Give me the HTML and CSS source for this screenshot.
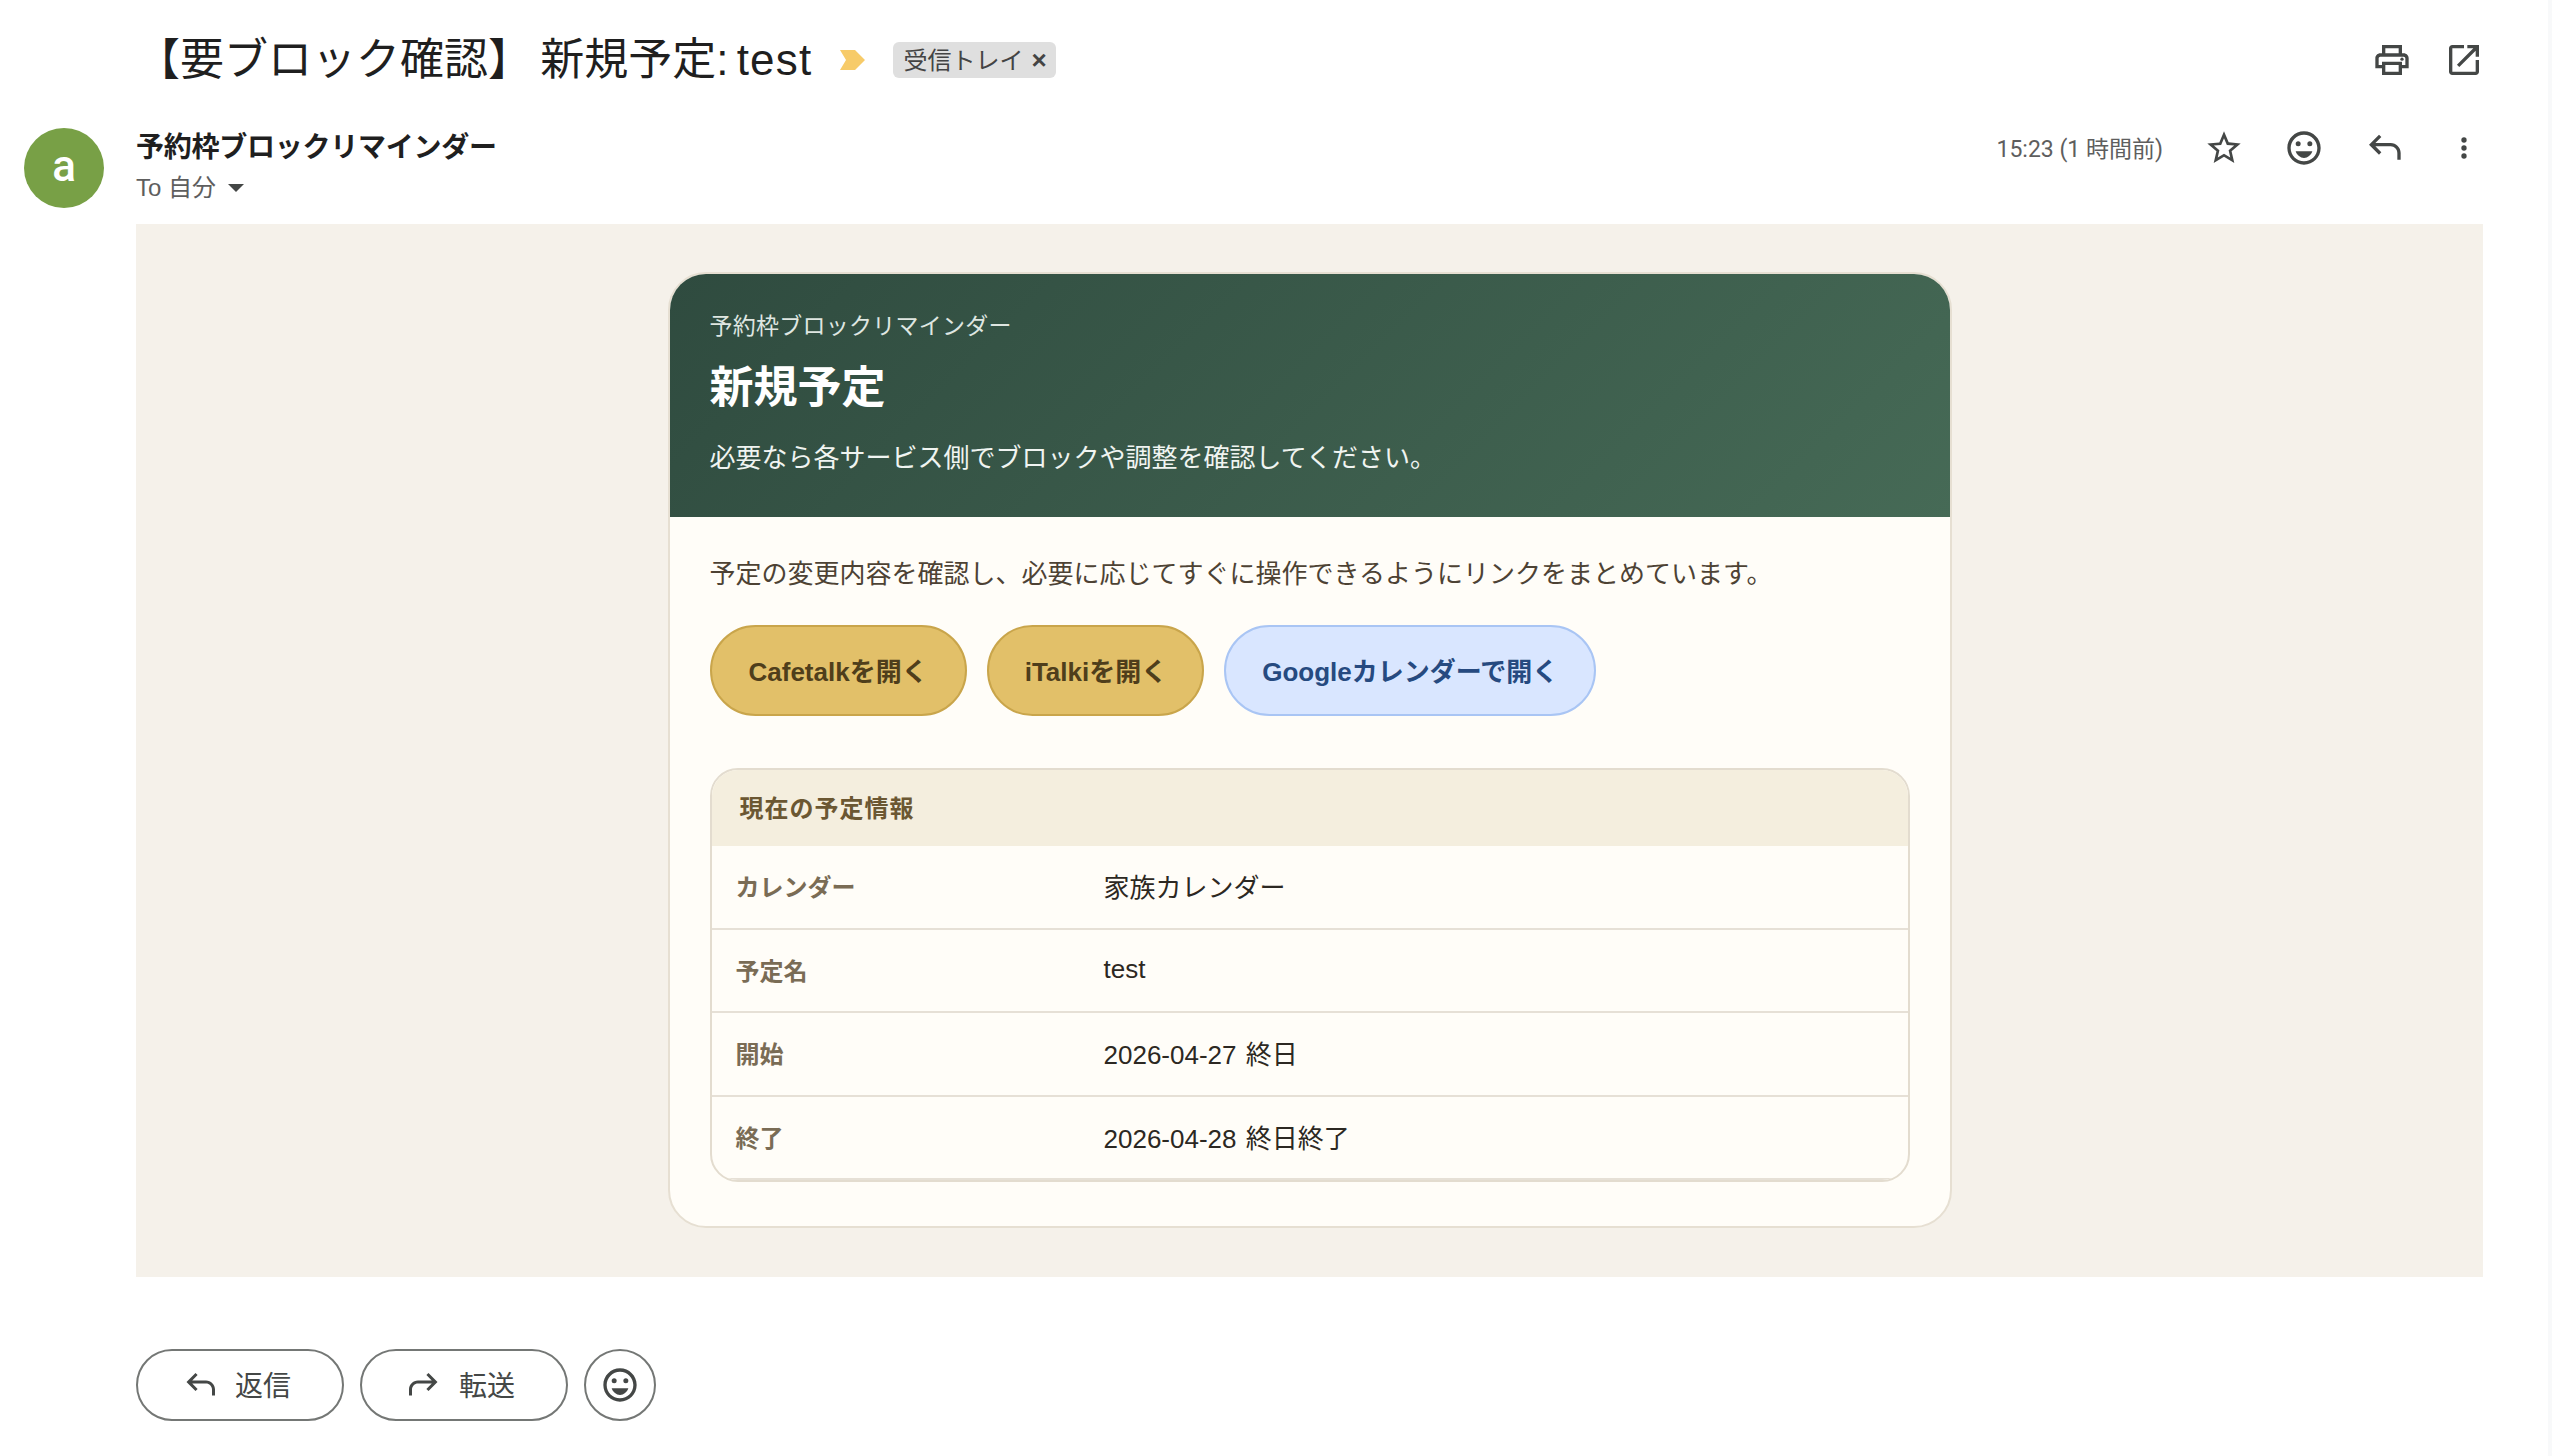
FILE: index.html
```html
<!DOCTYPE html>
<html lang="ja">
<head>
<meta charset="utf-8">
<title>【要ブロック確認】 新規予定: test</title>
<link rel="stylesheet" href="styles.css">
</head>
<body>
<div class="subject-row">
  <h1 class="subject">【要ブロック確認】 新規予定: <span class="subject-latin">test</span></h1>
  <svg class="marker" viewBox="0 0 25 20"><path d="M0 0h15l10 10-10 10H0l6-10z"/></svg>
  <span class="chip"><span class="chip-text">受信トレイ</span><span class="chip-x">×</span></span>
  <div class="top-actions">
    <span class="icon-box"><svg class="icon" viewBox="0 0 24 24"><path d="M19 8h-1V3H6v5H5c-1.66 0-3 1.34-3 3v6h4v4h12v-4h4v-6c0-1.66-1.34-3-3-3zM8 5h8v3H8V5zm8 12v2H8v-4h8v2zm2-2v-2H6v2H4v-4c0-.55.45-1 1-1h14c.55 0 1 .45 1 1v4h-2z"/><circle cx="18" cy="11.5" r="1"/></svg></span>
    <span class="icon-box"><svg class="icon" viewBox="0 0 24 24"><path d="M19 19H5V5h7V3H5c-1.11 0-2 .9-2 2v14c0 1.1.89 2 2 2h14c1.1 0 2-.9 2-2v-7h-2v7zM14 3v2h3.59l-9.83 9.83 1.41 1.41L19 6.41V10h2V3h-7z"/></svg></span>
  </div>
</div>
<div class="msg-head">
  <div class="avatar">a</div>
  <div class="sender">
    <div class="sender-name">予約枠ブロックリマインダー</div>
    <div class="recipient">To 自分<span class="caret"></span></div>
  </div>
  <div class="msg-actions">
    <span class="time">15:23 (1 時間前)</span>
    <span class="action"><svg class="icon" viewBox="0 0 24 24"><path d="M22 9.24l-7.19-.62L12 2 9.19 8.63 2 9.24l5.46 4.73L5.82 21 12 17.27 18.18 21l-1.63-7.03L22 9.24zM12 15.4l-3.76 2.27 1-4.28-3.32-2.88 4.38-.38L12 6.1l1.71 4.04 4.38.38-3.32 2.88 1 4.28L12 15.4z"/></svg></span>
    <span class="action"><svg class="icon" viewBox="0 0 24 24"><path d="M12 2C6.47 2 2 6.47 2 12s4.47 10 10 10 10-4.47 10-10S17.53 2 12 2zm0 18c-4.41 0-8-3.59-8-8s3.59-8 8-8 8 3.59 8 8-3.59 8-8 8z"/><circle cx="8.5" cy="9.5" r="1.5"/><circle cx="15.5" cy="9.5" r="1.5"/><path d="M7 14h10c-.8 2.3-2.8 4-5 4s-4.2-1.7-5-4z"/></svg></span>
    <span class="action"><svg class="icon" viewBox="0 0 24 24"><path d="M20 19v-4c0-2.2-1.8-4-4-4H6.83l3.58 3.59L9 16l-6-6 6-6 1.41 1.41L6.83 9H16c3.31 0 6 2.69 6 6v4h-2z"/></svg></span>
    <span class="action"><svg class="icon-more" viewBox="0 0 24 24"><circle cx="12" cy="6" r="2"/><circle cx="12" cy="12" r="2"/><circle cx="12" cy="18" r="2"/></svg></span>
  </div>
</div>
<main class="msg-body">
  <article class="card">
    <header class="card-head">
      <p class="eyebrow">予約枠ブロックリマインダー</p>
      <h2 class="card-title">新規予定</h2>
      <p class="card-desc">必要なら各サービス側でブロックや調整を確認してください。</p>
    </header>
    <div class="card-main">
      <p class="intro">予定の変更内容を確認し、必要に応じてすぐに操作できるようにリンクをまとめています。</p>
      <div class="links">
        <a class="link link-gold link-cafetalk">Cafetalkを開く</a>
        <a class="link link-gold link-italki">iTalkiを開く</a>
        <a class="link link-blue">Googleカレンダーで開く</a>
      </div>
      <section class="info">
        <h3 class="info-head">現在の予定情報</h3>
        <div class="info-row"><span class="info-label">カレンダー</span><span class="info-value">家族カレンダー</span></div>
        <div class="info-row"><span class="info-label">予定名</span><span class="info-value">test</span></div>
        <div class="info-row"><span class="info-label">開始</span><span class="info-value">2026-04-27 終日</span></div>
        <div class="info-row"><span class="info-label">終了</span><span class="info-value">2026-04-28 終日終了</span></div>
      </section>
    </div>
  </article>
</main>
<footer class="reply-bar">
  <button class="pill"><svg class="pill-icon" viewBox="0 0 24 24"><path d="M20 19v-4c0-2.2-1.8-4-4-4H6.83l3.58 3.59L9 16l-6-6 6-6 1.41 1.41L6.83 9H16c3.31 0 6 2.69 6 6v4h-2z"/></svg><span class="pill-text">返信</span></button>
  <button class="pill"><svg class="pill-icon" viewBox="0 0 24 24"><path d="M4 19v-4c0-2.2 1.8-4 4-4h9.17l-3.58 3.59L15 16l6-6-6-6-1.41 1.41L17.17 9H8c-3.31 0-6 2.69-6 6v4h2z"/></svg><span class="pill-text">転送</span></button>
  <button class="round"><svg class="icon" viewBox="0 0 24 24"><path d="M12 2C6.47 2 2 6.47 2 12s4.47 10 10 10 10-4.47 10-10S17.53 2 12 2zm0 18c-4.41 0-8-3.59-8-8s3.59-8 8-8 8 3.59 8 8-3.59 8-8 8z"/><circle cx="8.5" cy="9.5" r="1.5"/><circle cx="15.5" cy="9.5" r="1.5"/><path d="M7 14h10c-.8 2.3-2.8 4-5 4s-4.2-1.7-5-4z"/></svg></button>
</footer>
</body>
</html>
```
FILE: styles.css
```css
* { box-sizing: border-box; }
html, body { height: 100%; }
body {
  margin: 0;
  background: #fff;
  border-right: 4px solid #f8f9fa;
  overflow: hidden;
  color: #1f1f1f;
  font-family: "Liberation Sans", "Noto Sans CJK JP", sans-serif;
}
h1, h2, h3, p { margin: 0; font-weight: normal; }
svg { display: block; fill: #444746; }

.subject-row {
  height: 120px;
  display: flex;
  align-items: center;
  padding: 0 48px 0 136px;
}
.subject { font-size: 44px; line-height: 56px; color: #1f1f1f; white-space: nowrap; word-spacing: -4px; }
.subject-latin { letter-spacing: 1.2px; }
.marker { width: 25px; height: 20px; margin-left: 28px; fill: #f7cb69; }
.chip {
  margin-left: 28px;
  height: 36px;
  padding: 0 9px 0 10px;
  display: flex;
  align-items: center;
  border-radius: 6px;
  background: #dfdfdf;
  color: #444;
  font-size: 24px;
  white-space: nowrap;
}
.chip-text { margin-top: -4px; }
.chip-x { margin-left: 8px; font-size: 26px; line-height: 28px; font-weight: bold; }
.top-actions { margin-left: auto; display: flex; }
.icon-box { width: 72px; height: 40px; display: flex; align-items: center; justify-content: center; }
.icon { width: 40px; height: 40px; }
.icon-more { width: 32px; height: 32px; }

.msg-head { height: 104px; padding: 8px 44px 0 24px; display: flex; }
.avatar {
  width: 80px;
  height: 80px;
  border-radius: 50%;
  background: #78a046;
  color: #fff;
  font-family: Roboto, sans-serif;
  font-weight: 500;
  font-size: 44px;
  line-height: 76px;
  text-align: center;
}
.sender { margin-left: 32px; padding-top: 2px; }
.sender-name { font-size: 28px; line-height: 36px; font-weight: bold; color: #1f1f1f; letter-spacing: -.25px; }
.recipient { margin-top: 6px; font-size: 24px; line-height: 32px; color: #5e5e5e; display: flex; align-items: center; }
.caret { margin-left: 12px; width: 0; height: 0; border: 8px solid transparent; border-top: 8px solid #444746; border-bottom: 0; }
.msg-actions { margin-left: auto; height: 40px; display: flex; align-items: center; }
.time { font-family: Roboto, "Noto Sans CJK JP", sans-serif; font-size: 23px; color: #5e5e5e; margin: -3px 21px 0 0; }
.action { width: 80px; height: 40px; display: flex; align-items: center; justify-content: center; }

.msg-body {
  margin-left: 136px;
  width: 2347px;
  height: 1053px;
  padding-top: 48px;
  background: #f5f1ea;
}
.card {
  width: 1284px;
  margin: 0 auto;
  height: 956px;
  border: 2px solid #e6dfd2;
  border-radius: 38px;
  overflow: hidden;
  background: #fffdf8;
}
.card-head {
  height: 243px;
  padding: 36px 40px 0;
  background: linear-gradient(135deg, #2f4b3f, #466a56);
  color: #fff;
}
.eyebrow { font-size: 23px; letter-spacing: .25px; line-height: 32px; color: #dfe6e1; }
.card-title { margin-top: 16px; font-size: 44px; line-height: 60px; font-weight: bold; }
.card-desc { margin-top: 20px; font-size: 26px; line-height: 40px; color: #f0f4f1; }
.card-main { padding: 39px 40px 0; }
.intro { font-size: 26px; line-height: 36px; color: #4d4234; }
.links { margin-top: 33px; display: flex; gap: 20px; }
.link {
  height: 91px;
  padding: 0 36px 3px;
  display: flex;
  align-items: center;
  border-radius: 46px;
  font-size: 26px;
  font-weight: bold;
  white-space: nowrap;
}
.link-gold { background: #e2c069; border: 2px solid #c9a54b; color: #4f3e1b; }
.link-blue { background: #d9e6ff; border: 2px solid #a9c5f4; color: #264a80; }
.link-cafetalk { padding-left: 37px; padding-right: 37px; }
.link-italki { padding-left: 36px; padding-right: 35px; }

.info {
  margin-top: 52px;
  height: 414px;
  border: 2px solid #e3dccf;
  border-radius: 28px;
  overflow: hidden;
}
.info-head {
  height: 76px;
  padding: 0 28px 3px;
  display: flex;
  align-items: center;
  background: #f4eede;
  color: #6b5732;
  font-size: 24px;
  font-weight: bold;
  letter-spacing: 1px;
}
.info-row {
  height: 83.5px;
  display: grid;
  grid-template-columns: 368px 1fr;
  align-items: center;
  padding: 0 0 2px 24px;
  border-bottom: 2px solid #e6e0d6;
}
.info-label { font-size: 24px; font-weight: bold; color: #7a6c55; }
.info-value { font-size: 26px; color: #2c2822; word-spacing: 2px; }

.reply-bar { margin: 72px 0 0 136px; display: flex; gap: 16px; }
.pill {
  width: 208px;
  height: 72px;
  display: flex;
  align-items: center;
  gap: 17px;
  padding: 0 0 0 44px;
  border: 2px solid #747775;
  border-radius: 36px;
  background: #fff;
  color: #444746;
  font: 28px "Liberation Sans", "Noto Sans CJK JP", sans-serif;
}
.pill-text { margin-top: -3px; }
.pill-icon { width: 36px; height: 36px; }
.round {
  width: 72px;
  height: 72px;
  padding: 0;
  display: flex;
  align-items: center;
  justify-content: center;
  border: 2px solid #747775;
  border-radius: 50%;
  background: #fff;
}
```
